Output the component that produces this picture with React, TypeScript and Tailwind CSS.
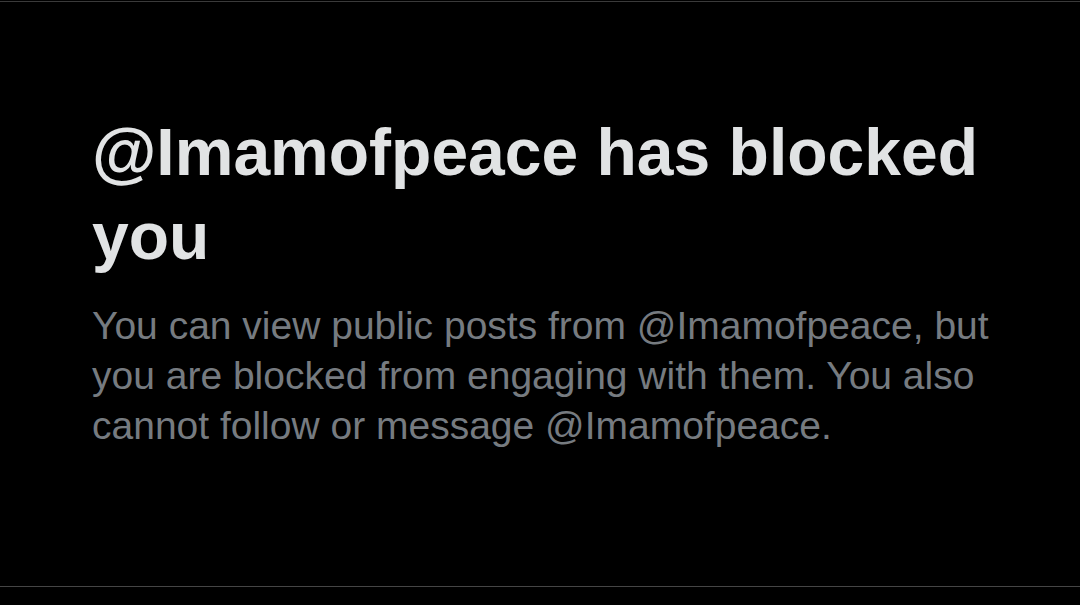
import React from 'react';

const App: React.FC = () => {
  return (
    <div className="h-[605px] w-full bg-black flex flex-col font-['Liberation_Sans',Arial,sans-serif]">
      {/* top divider */}
      <div className="mt-px h-px bg-[#3a3a3a]" />

      <div className="pl-[92px] pt-[108px] w-[1010px]">
        <h1 className="text-[66px] leading-[84px] font-bold text-[#e1e3e4]">
          @Imamofpeace has blocked you
        </h1>
        <p className="mt-[23px] text-[39px] leading-[50px] text-[#767b80]">
          You can view public posts from @Imamofpeace, but you are blocked from engaging with them. You also cannot
          follow or message @Imamofpeace.
        </p>
      </div>

      {/* bottom divider */}
      <div className="mt-auto mb-[18px] h-px bg-[#454545]" />
    </div>
  );
};

export default App;
